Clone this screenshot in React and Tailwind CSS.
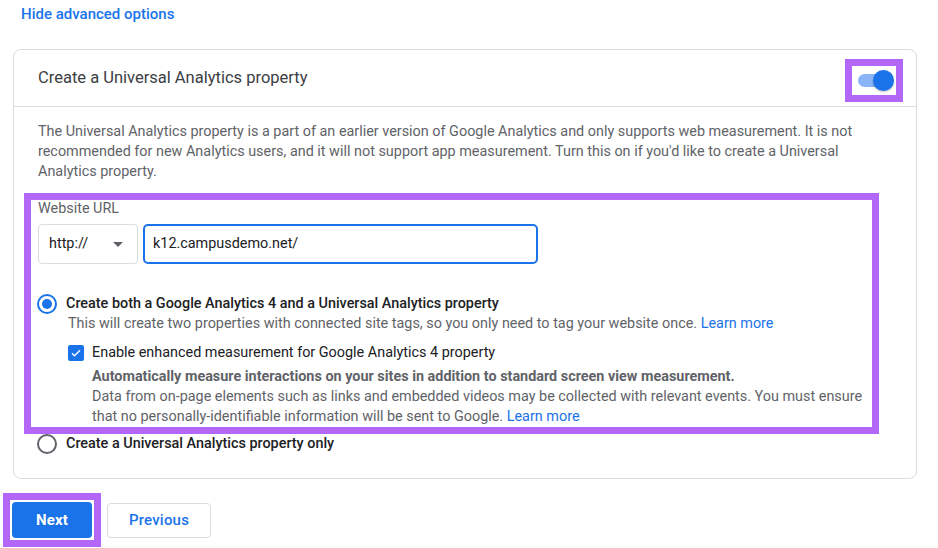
const BLUE = '#1a73e8';

function Radio({ checked }) {
  return (
    <span
      className={`flex h-[20px] w-[20px] shrink-0 items-center justify-center rounded-full border-2 ${
        checked ? 'border-[#1a73e8]' : 'border-[#5f6368]'
      }`}
    >
      {checked && <span className="h-[10px] w-[10px] rounded-full bg-[#1a73e8]" />}
    </span>
  );
}

function Checkbox() {
  return (
    <span className="flex h-[16px] w-[16px] shrink-0 items-center justify-center rounded-[2px] bg-[#1a73e8]">
      <svg width="12" height="12" viewBox="0 0 24 24" fill="none">
        <path d="M4 12.5l5 5L20 6.5" stroke="#fff" strokeWidth="2.6" />
      </svg>
    </span>
  );
}

function Toggle() {
  return (
    <div className="flex h-[43px] w-[58px] items-center justify-center border-[7px] border-[#b367f8] bg-white">
      <div className="relative h-[13px] w-[32px] rounded-full bg-[#8ab4f8]">
        <span className="absolute -right-[4px] -top-[4px] h-[21px] w-[21px] rounded-full bg-[#1a73e8] shadow-[0_1px_2px_rgba(0,0,0,0.25)]" />
      </div>
    </div>
  );
}

export default function App() {
  return (
    <div className="h-[548px] w-[938px] overflow-hidden bg-white font-['Roboto',sans-serif] text-[14.4px] text-[#202124]">
      <div className="pl-[21px] pt-[4px] text-[15px] font-medium leading-[20px] text-[#1a73e8]">
        Hide advanced options
      </div>

      <div className="ml-[13px] mt-[25px] w-[904px] rounded-[8px] border border-[#dadce0]">
        <div className="flex h-[57px] items-center justify-between border-b border-[#dadce0] pl-[24px] pr-[13px]">
          <span className="text-[16.5px] leading-[24px] text-[#3c4043]">
            Create a Universal Analytics property
          </span>
          <div className="mt-[4px]">
            <Toggle />
          </div>
        </div>

        <div className="px-[24px] pb-[24px] pt-[15px]">
          <p className="text-[14.4px] leading-[20px] text-[#5f6368]">
            The Universal Analytics property is a part of an earlier version of Google Analytics and only supports web
            measurement. It is not recommended for new Analytics users, and it will not support app measurement. Turn
            this on if you'd like to create a Universal Analytics property.
          </p>

          <div className="-ml-[14px] mr-[13px] mt-[11px] border-[7px] border-[#b367f8] pl-[7px]">
            <div className="text-[14.4px] leading-[18px] text-[#5f6368]">Website URL</div>
            <div className="mt-[6px] flex gap-[5px]">
              <div className="flex h-[40px] w-[100px] items-center justify-between rounded-[4px] border border-[#dadce0] pl-[10px] pr-[14px]">
                <span className="text-[14.4px] text-[#202124]">http://</span>
                <span className="h-0 w-0 border-x-[5px] border-t-[5px] border-x-transparent border-t-[#5f6368]" />
              </div>
              <div className="flex h-[40px] w-[395px] items-center rounded-[5px] border-2 border-[#1a73e8] pl-[8px]">
                <span className="text-[14.4px] text-[#202124]">k12.campusdemo.net/</span>
              </div>
            </div>

            <div className="mt-[30px] flex items-center gap-[9px] -ml-[1px]">
              <Radio checked />
              <span className="text-[14.4px] font-medium leading-[20px] text-[#202124]">
                Create both a Google Analytics 4 and a Universal Analytics property
              </span>
            </div>
            <p className="pl-[30px] text-[14.4px] leading-[20px] text-[#5f6368]">
              This will create two properties with connected site tags, so you only need to tag your website once.{' '}
              <a className="text-[#1a73e8]">Learn more</a>
            </p>

            <div className="mt-[9px] flex items-center gap-[8px] pl-[30px]">
              <Checkbox />
              <span className="text-[14.4px] leading-[20px] text-[#202124]">
                Enable enhanced measurement for Google Analytics 4 property
              </span>
            </div>
            <div className="pl-[54px] pt-[4px] text-[14.4px] leading-[20px] text-[#5f6368]">
              <p className="font-bold">
                Automatically measure interactions on your sites in addition to standard screen view measurement.
              </p>
              <p>
                Data from on-page elements such as links and embedded videos may be collected with relevant events. You
                must ensure that no personally-identifiable information will be sent to Google.{' '}
                <a className="text-[#1a73e8]">Learn more</a>
              </p>
            </div>
          </div>

          <div className="flex items-center gap-[9px] -ml-[1px]">
            <Radio />
            <span className="text-[14.4px] font-medium leading-[20px] text-[#202124]">
              Create a Universal Analytics property only
            </span>
          </div>
        </div>
      </div>

      <div className="ml-[3px] mt-[14px] flex items-center gap-[6px]">
        <div className="border-[7px] border-[#b367f8] p-[2px]">
          <button
            className="flex h-[36px] w-[80px] items-center justify-center rounded-[4px] text-[15px] font-bold tracking-[0.2px] text-white"
            style={{ backgroundColor: BLUE }}
          >
            Next
          </button>
        </div>
        <button className="flex h-[35px] w-[104px] items-center justify-center rounded-[4px] border border-[#dadce0] text-[15px] font-medium tracking-[0.2px] text-[#1a73e8]">
          Previous
        </button>
      </div>
    </div>
  );
}
